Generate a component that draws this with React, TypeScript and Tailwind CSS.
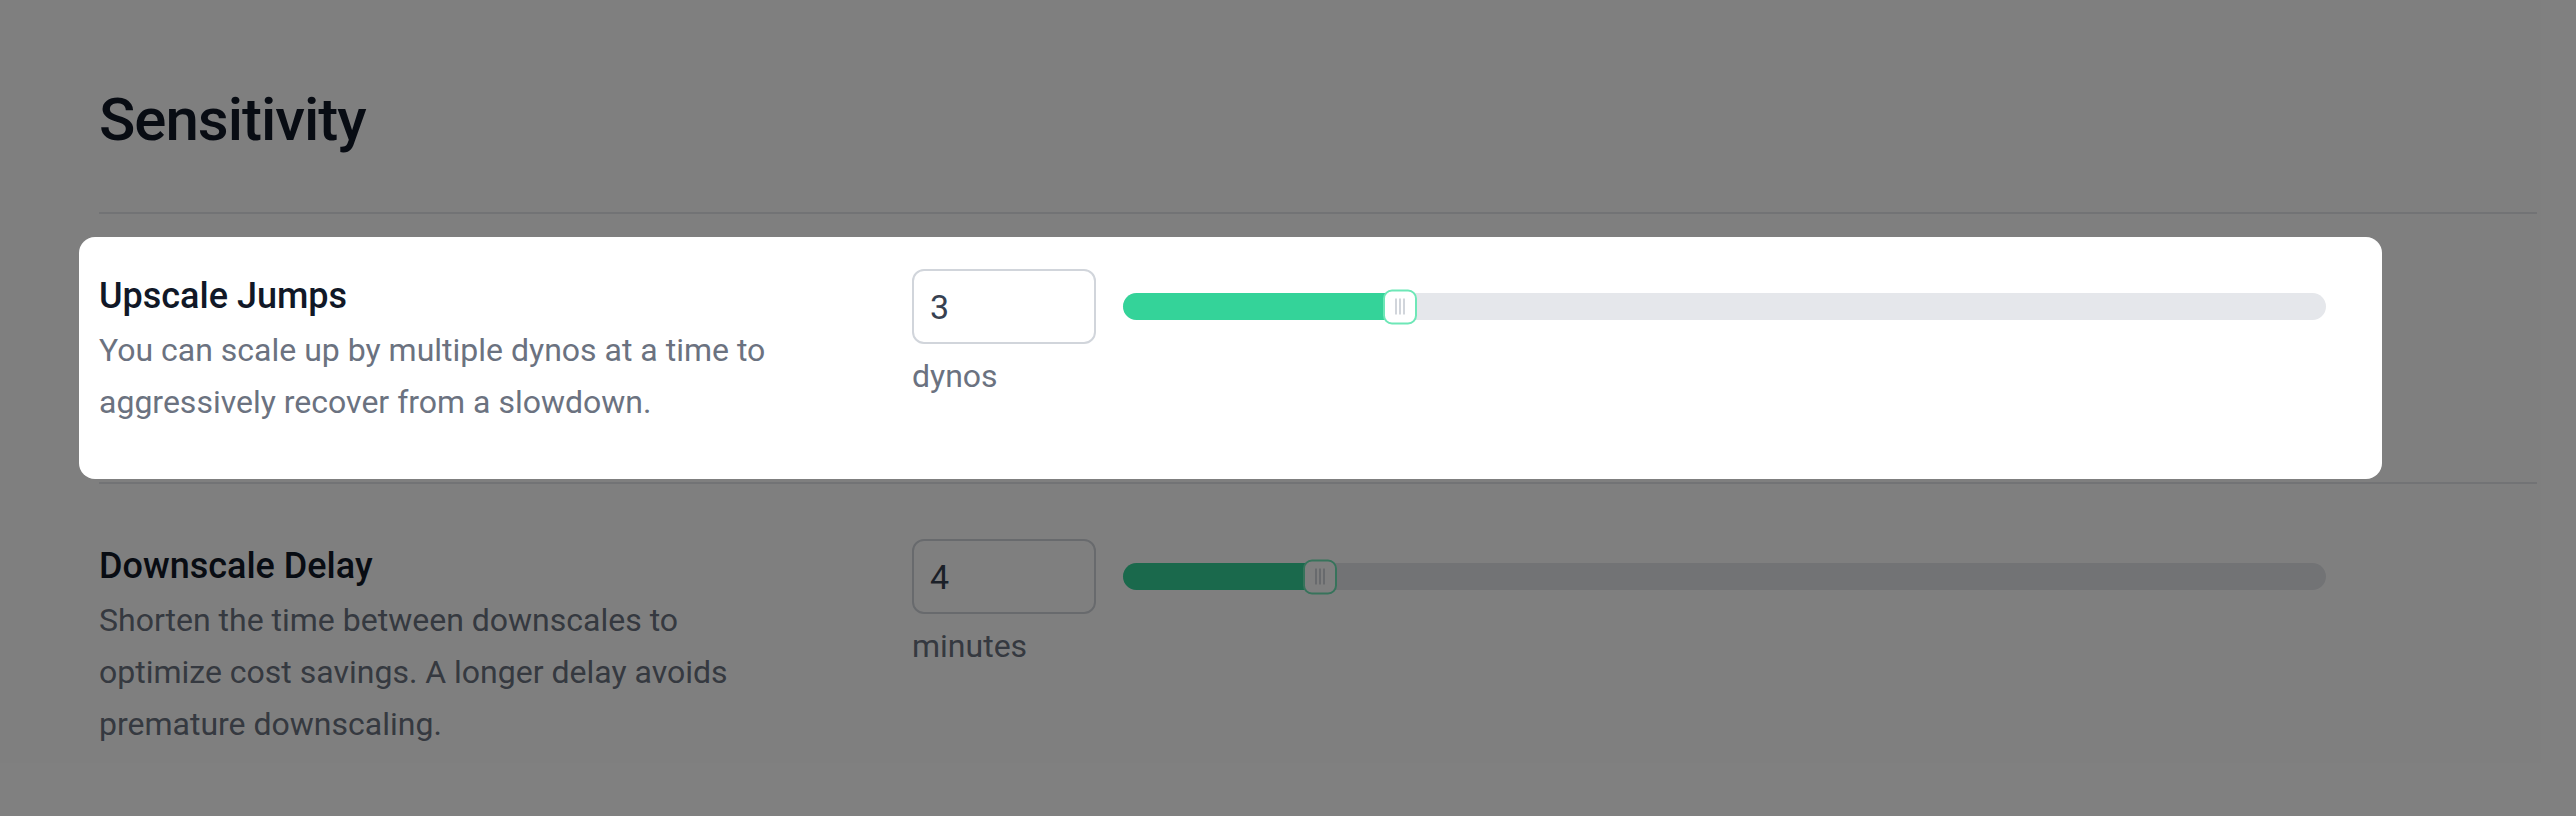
import React from 'react'

type Setting = {
  title: string
  description: string
  value: number
  unit: string
  fraction: number
  highlighted?: boolean
}

const settings: Setting[] = [
  {
    title: 'Upscale Jumps',
    description: 'You can scale up by multiple dynos at a time to aggressively recover from a slowdown.',
    value: 3,
    unit: 'dynos',
    fraction: 0.2224,
    highlighted: true,
  },
  {
    title: 'Downscale Delay',
    description: 'Shorten the time between downscales to optimize cost savings. A longer delay avoids premature downscaling.',
    value: 4,
    unit: 'minutes',
    fraction: 0.154,
  },
]

function Slider({ fraction }: { fraction: number }) {
  // thumb centre travels from 17px to (100% - 17px)
  const pos = `calc(17px + ${fraction} * (100% - 34px))`
  return (
    <div className="relative h-[27px] w-full rounded-full bg-[#e5e7eb]">
      <div className="absolute inset-y-0 left-0 rounded-l-full bg-[#34d399]" style={{ width: pos }} />
      <div
        className="absolute top-1/2 flex h-[35px] w-[34px] -translate-x-1/2 -translate-y-1/2 items-center justify-center gap-[2px] rounded-[9px] border-2 border-[#6ee7b7] bg-white"
        style={{ left: pos }}
      >
        <span className="h-[16px] w-[2px] bg-[#d1d5db]" />
        <span className="h-[16px] w-[2px] bg-[#d1d5db]" />
        <span className="h-[16px] w-[2px] bg-[#d1d5db]" />
      </div>
    </div>
  )
}

function SettingRow({ setting, last }: { setting: Setting; last: boolean }) {
  return (
    <div className={`pt-[43px] pb-[23px] ${last ? '' : 'border-b-2 border-[#e5e7eb]'}`}>
      <div className={`relative flex h-[202px] w-[2263px] items-start ${setting.highlighted ? 'z-20' : ''}`}>
        {setting.highlighted && <div className="absolute -inset-[20px] -z-10 rounded-2xl bg-white" />}

        {/* Label + description */}
        <div className="w-[813px] shrink-0 pt-[11px]">
          <h3 className="text-[36px] leading-[56px] font-medium text-[#111827]">{setting.title}</h3>
          <p className="max-w-[700px] text-[32px] leading-[52px] text-[#6b7280]">{setting.description}</p>
        </div>

        {/* Number input */}
        <div className="w-[184px] shrink-0 pt-[12px]">
          <input
            readOnly
            value={setting.value}
            className="h-[75px] w-[184px] rounded-[12px] border-2 border-[#d1d5db] bg-white px-[16px] text-[34px] text-[#374151] outline-none"
          />
          <p className="mt-[6px] text-[32px] leading-[52px] text-[#6b7280]">{setting.unit}</p>
        </div>

        {/* Slider */}
        <div className="flex h-[87px] flex-1 items-center pt-[12px] pr-[36px] pl-[27px]">
          <Slider fraction={setting.fraction} />
        </div>
      </div>
    </div>
  )
}

export default function App() {
  return (
    <div className="relative h-[816px] w-full overflow-hidden bg-white font-[Roboto,sans-serif]">
      <div className="pr-[39px] pl-[99px]">
        <div className="border-b-2 border-[#e5e7eb] pt-[84px] pb-[56px]">
          <h2 className="text-[60px] leading-[72px] font-medium tracking-[-1px] text-[#111827]">Sensitivity</h2>
        </div>
        {settings.map((s, i) => (
          <SettingRow key={s.title} setting={s} last={i === settings.length - 1} />
        ))}
      </div>

      {/* Tour overlay */}
      <div className="absolute inset-0 z-10 bg-black/50" />
    </div>
  )
}
